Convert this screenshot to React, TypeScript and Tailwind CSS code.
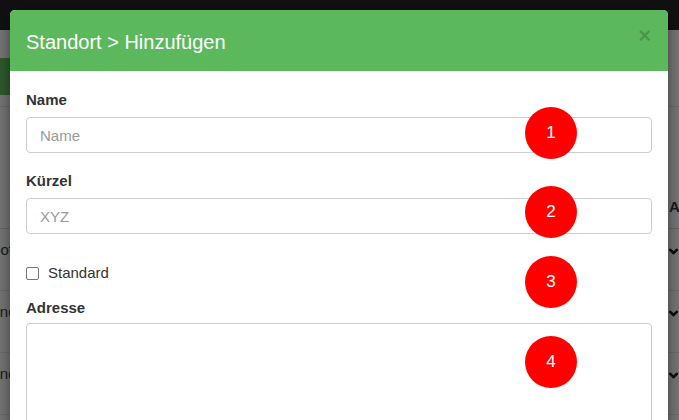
import { ChevronDown } from 'lucide-react'

const rows = [
	{ text: 'Depot Berlin', shift: '-ml-[27px]' },
	{ text: 'München Mitte', shift: '-ml-[21px]' },
	{ text: 'München Ost', shift: '-ml-[21px]' },
]

const markers = [
	{ n: 1, top: 'top-[107px]' },
	{ n: 2, top: 'top-[186px]' },
	{ n: 3, top: 'top-[256px]' },
	{ n: 4, top: 'top-[336px]' },
]

export default function App() {
	return (
		<div className="relative w-[679px] h-[420px] overflow-hidden bg-[#777777] font-['Liberation_Sans',Arial,sans-serif] text-[15px]">
			{/* page behind the backdrop */}
			<div className="h-[30px] bg-[#111111]" />
			<div className="h-[77px] pt-[28px] border-b border-[#6c6c6c]">
				<div className="h-[37px] w-[80px] bg-[#2e5c2e]" />
			</div>
			<div className="h-[122px] flex justify-between items-end pb-[10px] border-b border-[#666666]">
				<div />
				<div className="w-[10px] font-bold text-[#1a1a1a] whitespace-nowrap">Aktion</div>
			</div>
			{rows.map((row) => (
				<div
					key={row.text}
					className="h-[62px] flex justify-between pt-[10px] border-b border-[#6c6c6c]"
				>
					<div className={`${row.shift} whitespace-nowrap text-[#1a1a1a]`}>{row.text}</div>
					<div className="w-[10px] pt-[6px]">
						<ChevronDown size={13} strokeWidth={5} className="text-[#0d0d0d] -ml-[2px]" />
					</div>
				</div>
			))}

			{/* modal */}
			<div className="absolute left-[10px] top-[10px] w-[658px] h-[430px] bg-white rounded-[5px] overflow-hidden shadow-[0_5px_15px_rgba(0,0,0,0.5)]">
				<div className="h-[61px] bg-[#5cb85c] flex items-center justify-between pl-[16px] pr-[17px]">
					<h4 className="text-white text-[20px] leading-none pt-[2px]">Standort &gt; Hinzufügen</h4>
					<span className="text-[22px] font-bold text-black/20 leading-none -mt-[10px]">×</span>
				</div>
				<div className="px-[16px] pt-[18px] text-[#333333]">
					<label className="block font-bold leading-[22px]">Name</label>
					<input
						placeholder="Name"
						className="mt-[6px] w-full h-[36px] border border-[#cccccc] rounded-[4px] px-[13px] placeholder:text-[#999999] outline-none"
					/>
					<label className="block mt-[17px] font-bold leading-[22px]">Kürzel</label>
					<input
						placeholder="XYZ"
						className="mt-[6px] w-full h-[36px] border border-[#cccccc] rounded-[4px] px-[13px] placeholder:text-[#999999] outline-none"
					/>
					<div className="mt-[28px] flex items-center gap-[9px] leading-[22px]">
						<span className="w-[13px] h-[13px] border border-[#767676] rounded-[2px] bg-white" />
						<span>Standard</span>
					</div>
					<label className="block mt-[13px] font-bold leading-[22px]">Adresse</label>
					<textarea className="mt-[4px] w-full h-[120px] border border-[#cccccc] rounded-[4px] px-[13px] py-[7px] outline-none resize-none" />
				</div>
			</div>

			{/* numbered markers */}
			{markers.map((m) => (
				<div
					key={m.n}
					className={`absolute left-[525px] ${m.top} w-[52px] h-[52px] rounded-full bg-[#ff0000] flex items-center justify-center text-white text-[17px]`}
				>
					{m.n}
				</div>
			))}
		</div>
	)
}
